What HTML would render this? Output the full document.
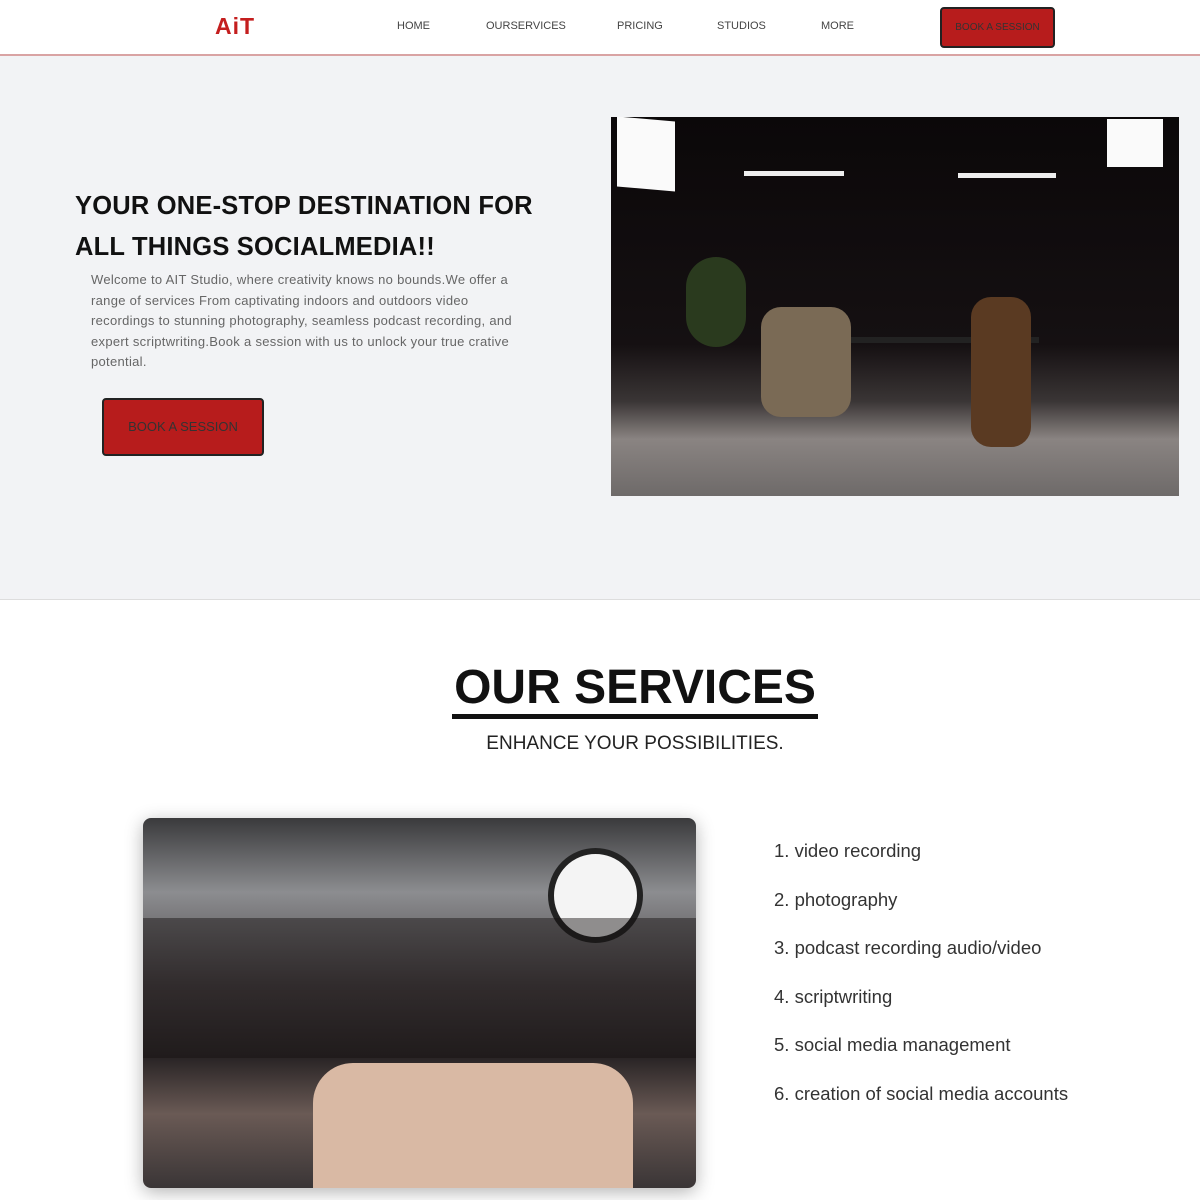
<!DOCTYPE html>
<html><head><meta charset="utf-8"><style>
*{margin:0;padding:0;box-sizing:border-box}
body{width:1200px;height:1200px;overflow:hidden;font-family:"Liberation Sans","DejaVu Sans",sans-serif;background:#fff;position:relative}
.nav{position:absolute;top:0;left:0;width:1200px;height:56px;background:#fff;border-bottom:2px solid #d9a3a3}
.logo{position:absolute;left:215px;top:13px;font-weight:bold;font-size:23px;color:#c41e1e;letter-spacing:1px}
.nav a{position:absolute;top:20px;font-size:11px;color:#444;text-decoration:none}
.nbtn{position:absolute;left:940px;top:7px;width:115px;height:41px;background:#b71c1c;border:2px solid #222;border-radius:4px;font-size:10px;color:#333;text-align:center;line-height:37px}
.hero{position:absolute;top:56px;left:0;width:1200px;height:544px;background:#f2f3f5;border-bottom:1px solid #ddd}
h1{position:absolute;left:75px;top:130px;font-size:25.5px;line-height:41px;color:#111;font-weight:bold;width:490px;letter-spacing:.2px}
.p{position:absolute;left:91px;top:214px;width:440px;font-size:13px;letter-spacing:.3px;line-height:20.5px;color:#666;white-space:nowrap}
.hbtn{position:absolute;left:102px;top:342px;width:162px;height:58px;background:#b71c1c;border:2px solid #222;border-radius:4px;font-size:13px;color:#333;text-align:center;line-height:54px}
.img1{position:absolute;left:611px;top:61px;width:568px;height:379px;background:linear-gradient(#0b0809 0,#151012 60%,#3a3535 75%,#8a8482 85%,#6e6a69 100%);overflow:hidden}
.img2{position:absolute;left:143px;top:818px;width:553px;height:370px;border-radius:8px;overflow:hidden;box-shadow:0 4px 18px rgba(0,0,0,.3);background:linear-gradient(#3a3a3c 0,#8c8d90 20%,#4a4446 45%,#2a2526 65%,#6a5a55 80%,#3a3536 100%)}
.t{position:absolute;left:35px;width:1200px;text-align:center}
h2{font-size:48px;font-weight:bold;color:#111;display:inline-block;border-bottom:5px solid #111;line-height:52px;padding:0 2px}
ol{position:absolute;left:774px;top:840px;list-style:none;font-size:18.5px;color:#333}
ol li{height:48.5px}
</style></head><body>
<div class="nav">
<div class="logo">AiT</div>
<a style="left:397px">HOME</a><a style="left:486px">OURSERVICES</a><a style="left:617px">PRICING</a><a style="left:717px">STUDIOS</a><a style="left:821px">MORE</a>
<div class="nbtn">BOOK A SESSION</div>
</div>
<div class="hero">
<h1>YOUR ONE-STOP DESTINATION FOR ALL THINGS SOCIALMEDIA!!</h1>
<div class="p">Welcome to AIT Studio, where creativity knows no bounds.We offer a<br>range of services From captivating indoors and outdoors video<br>recordings to stunning photography, seamless podcast recording, and<br>expert scriptwriting.Book a session with us to unlock your true crative<br>potential.</div>
<div class="hbtn">BOOK A SESSION</div>
<div class="img1">
<div style="position:absolute;left:6px;top:2px;width:58px;height:70px;background:#fafafa;transform:skewY(5deg)"></div>
<div style="position:absolute;left:496px;top:2px;width:56px;height:48px;background:#fafafa"></div>
<div style="position:absolute;left:133px;top:54px;width:100px;height:5px;background:#eee"></div>
<div style="position:absolute;left:347px;top:56px;width:98px;height:5px;background:#eee"></div>
<div style="position:absolute;left:178px;top:220px;width:250px;height:6px;background:#222"></div>
<div style="position:absolute;left:150px;top:190px;width:90px;height:110px;background:#7a6a55;border-radius:20px"></div>
<div style="position:absolute;left:360px;top:180px;width:60px;height:150px;background:#5a3a22;border-radius:20px"></div>
<div style="position:absolute;left:75px;top:140px;width:60px;height:90px;background:#2a3a1e;border-radius:30px"></div>
</div>
</div>
<div class="t" style="top:662px"><h2>OUR SERVICES</h2></div>
<div class="t" style="top:733px;font-size:19px;color:#222">ENHANCE YOUR POSSIBILITIES.</div>
<div class="img2">
<div style="position:absolute;left:405px;top:30px;width:95px;height:95px;border-radius:50%;background:#f4f4f4;border:6px solid #222"></div>
<div style="position:absolute;left:170px;top:245px;width:320px;height:125px;background:#d9b9a4;border-radius:40px 40px 0 0"></div>
<div style="position:absolute;left:0;top:100px;width:553px;height:140px;background:rgba(20,15,15,.45)"></div>
</div>
<ol>
<li>1. video recording</li><li>2. photography</li><li>3. podcast recording audio/video</li><li>4. scriptwriting</li><li>5. social media management</li><li>6. creation of social media accounts</li>
</ol>
</body></html>
